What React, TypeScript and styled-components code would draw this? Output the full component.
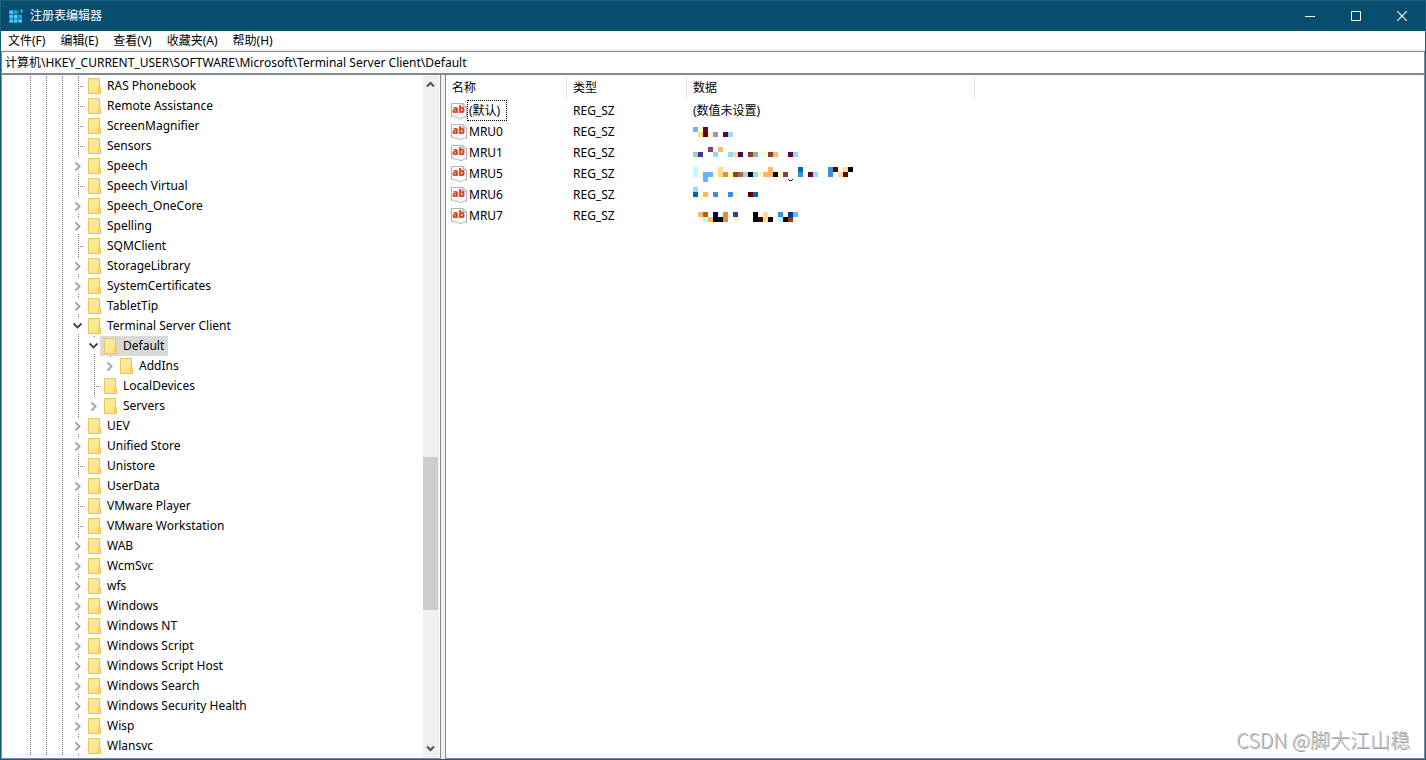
import React from "react";
import styled, { createGlobalStyle } from "styled-components";

const GlobalStyle = createGlobalStyle`
  * { box-sizing: border-box; }
  html, body { margin: 0; padding: 0; height: 100%; }
  body, button, input, table {
    font-family: "Noto Sans", "Noto Sans CJK SC", sans-serif;
    font-size: 12px;
    color: #000;
  }
  button { border: 0; padding: 0; background: none; }
`;

const FRAME = "#1b5e80";
const EDGE = "#828790";
const FACE = "#f0f0f0";

const Window = styled.div`
  display: flex;
  flex-direction: column;
  height: 100vh;
  overflow: hidden;
  background: ${FACE};
  border: 1px solid ${FRAME};
  position: relative;
`;

const TitleBar = styled.header`
  display: flex;
  align-items: center;
  flex: none;
  height: 30px;
  padding-left: 7px;
  background: #074d6d;
  color: #fff;
`;

const Title = styled.h1`
  flex: 1;
  margin: 0 0 0 6px;
  font-size: 12px;
  font-weight: 400;
  line-height: 18px;
`;

const CaptionButton = styled.button`
  display: flex;
  align-items: center;
  justify-content: center;
  width: 46px;
  height: 28px;
`;

const MenuBar = styled.nav`
  display: flex;
  flex: none;
  gap: 1px;
  height: 18px;
  background: #fff;
`;

const MenuButton = styled.button`
  padding: 0 7px;
  line-height: 20px;
  white-space: nowrap;
`;

const AddressInput = styled.input`
  flex: none;
  height: 24px;
  margin-top: 2px;
  padding: 0 3px 2px;
  border: solid ${EDGE};
  border-width: 1px 1px 2px;
  border-radius: 0;
  outline: 0;
  background: #fff;
`;

const Body = styled.div`
  display: flex;
  flex: 1;
  min-height: 0;
`;

const Pane = styled.section<{ $width?: number }>`
  display: flex;
  flex: ${(p) => (p.$width ? `0 0 ${p.$width}px` : "1")};
  min-width: 0;
  overflow: hidden;
  background: #fff;
  border: solid ${EDGE};
  border-width: 0 1px 1px;
`;

const Splitter = styled.div`
  flex: 0 0 4px;
  background: ${FACE};
`;

const Tree = styled.ul`
  flex: 1;
  min-width: 0;
  margin: 0;
  padding: 1px 0 0 18px;
  list-style: none;
  overflow: hidden;
`;

const TreeRow = styled.li`
  display: flex;
  height: 20px;
`;

const dotsDown = "repeating-linear-gradient(to bottom, #707070 0 1px, transparent 1px 2px)";
const dotsAcross = "repeating-linear-gradient(to right, #707070 0 1px, transparent 1px 2px)";

const Guide = styled.span<{ $leaf?: boolean }>`
  flex: 0 0 16px;
  background-image: ${(p) => (p.$leaf ? `${dotsDown}, ${dotsAcross}` : dotsDown)};
  background-size: 1px 100%, 6px 1px;
  background-position: 10px 0, 10px 10px;
  background-repeat: no-repeat;
`;

const Expander = styled.button<{ $last?: boolean }>`
  display: flex;
  align-items: center;
  justify-content: flex-end;
  flex: 0 0 16px;
  height: 20px;
  background-image: ${(p) => (p.$last ? dotsDown : `${dotsDown}, ${dotsDown}`)};
  background-size: 1px 2px, 1px 2px;
  background-position: 10px 0, 10px 18px;
  background-repeat: no-repeat;
`;

const TreeLabel = styled.span<{ $selected?: boolean }>`
  display: flex;
  align-items: center;
  gap: 5px;
  padding: 0 4px;
  line-height: 20px;
  white-space: nowrap;
  background: ${(p) => (p.$selected ? "#d9d9d9" : "transparent")};
`;

const ScrollBar = styled.div`
  display: flex;
  flex-direction: column;
  flex: 0 0 16px;
  margin-right: 1px;
  padding-bottom: 1px;
  background: ${FACE};
`;

const ScrollButton = styled.button`
  display: flex;
  align-items: center;
  justify-content: center;
  flex: 0 0 18px;
  width: 15px;
`;

const ScrollPart = styled.div<{ $grow: number; $thumb?: boolean }>`
  flex: ${(p) => p.$grow} 0 0;
  width: 15px;
  background: ${(p) => (p.$thumb ? "#cdcdcd" : "transparent")};
`;

const ValueTable = styled.table`
  table-layout: fixed;
  width: 100%;
  align-self: flex-start;
  border-collapse: separate;
  border-spacing: 0;
  margin-top: 1px;
`;

const HeadCell = styled.th<{ $edge?: boolean }>`
  height: 24px;
  padding: 0 6px;
  text-align: left;
  font-weight: 400;
  line-height: 18px;
  border-right: ${(p) => (p.$edge ? "1px solid #e5e5e5" : "0")};
`;

const Cell = styled.td`
  height: 21px;
  padding: 0 6px;
  line-height: 21px;
  vertical-align: top;
  white-space: nowrap;
`;

const NameCell = styled(Cell)`
  padding: 0 0 0 5px;
`;

const NameWrap = styled.div`
  display: flex;
  align-items: center;
  height: 21px;
`;

const ValueName = styled.span<{ $focused?: boolean }>`
  padding: 0 ${(p) => (p.$focused ? 6 : 1)}px 0 1px;
  line-height: 19px;
  border: 1px dotted ${(p) => (p.$focused ? "#000" : "transparent")};
`;

const Mosaic = styled.svg`
  display: block;
`;

const Watermark = styled.div`
  position: absolute;
  right: 15px;
  bottom: 4px;
  font-family: "Noto Sans CJK SC", sans-serif;
  font-size: 20px;
  font-weight: 300;
  line-height: 30px;
  color: #c0c0c0;
  text-shadow: 1px 1px 0 #a0a0a0;
`;

const AppIcon = () => (
  <svg width="16" height="16" viewBox="0 0 16 16" aria-hidden="true">
    <path d="M1 2h9v4h4v9H1z" fill="#0b6a9c" />
    <path d="M1.500 2.500h3.500v3.500h-3.500zM1.500 7h3.500v3.500h-3.500zM1.500 11.500h3.500v3h-3.500z" fill="#4cc8f8" />
    <path d="M6 11.500h3.500v3h-3.500zM6 7h3.500v3.500h-3.500z" fill="#52ccf8" />
    <path d="M6 2.500h3.500v3.500h-3.500z" fill="#1d9fe0" />
    <path d="M10.500 7h3.500v3.500h-3.500z" fill="#1d9fe0" />
    <path d="M10.500 11.500h3.500v3h-3.500z" fill="#52ccf8" />
    <path d="M13.500 1v4M11.500 3h4" stroke="#35b4ea" strokeWidth="1" />
  </svg>
);

const Folder = () => (
  <svg width="14" height="16" viewBox="0 0 14 16" aria-hidden="true">
    <defs>
      <linearGradient id="folder" x1="0" y1="0" x2="1" y2="1">
        <stop offset="0" stopColor="#ffeba6" />
        <stop offset="1" stopColor="#fde283" />
      </linearGradient>
    </defs>
    <path d="M.5 .5h11v9h1v6H.5z" fill="url(#folder)" stroke="#ecc650" />
    <path d="M10.500 15.500v-5.500h2v5.500z" fill="#ffe595" stroke="#ecc650" />
  </svg>
);

const Chevron = ({ dir }: { dir: "right" | "down" }) =>
  dir === "right" ? (
    <svg width="10" height="20" viewBox="0 0 10 20" aria-hidden="true">
      <path d="M1.500 6.500L5.500 10.500L1.500 14.500" fill="none" stroke="#a6a6a6" strokeWidth="1.900" />
    </svg>
  ) : (
    <svg width="11" height="20" viewBox="0 0 11 20" aria-hidden="true">
      <path d="M.5 7.500L4.500 11.500L8.500 7.500" fill="none" stroke="#404040" strokeWidth="1.900" />
    </svg>
  );

const ScrollArrow = ({ up }: { up?: boolean }) => (
  <svg width="9" height="7" viewBox="0 0 9 7" aria-hidden="true">
    <path d={up ? "M1 5.500L4.500 2L8 5.500" : "M1 1.500L4.500 5L8 1.500"} fill="none" stroke="#505050" strokeWidth="2" />
  </svg>
);

const StringIcon = () => (
  <svg width="16" height="16" viewBox="0 0 16 16" aria-hidden="true">
    <path
      d="M.5 .5H12L15.500 4V14.500L13.500 13.500L11.500 15L8.500 15.500L6.500 14L4.500 14.500L2.500 13L.5 13.500Z"
      fill="#fff"
      stroke="#b0b0b0"
    />
    <path d="M12 .5V4H15.500" fill="none" stroke="#a0a0a0" />
    <text x="7.500" y="10" textAnchor="middle" fontFamily="Open Sans, sans-serif" fontSize="10" fontWeight="800" fill="#d5421c">
      ab
    </text>
  </svg>
);

type Node = { name: string; level?: number; state?: "open" | "closed"; selected?: boolean; last?: boolean };

const nodes: Node[] = [
  { name: "RAS Phonebook" },
  { name: "Remote Assistance" },
  { name: "ScreenMagnifier" },
  { name: "Sensors" },
  { name: "Speech", state: "closed" },
  { name: "Speech Virtual" },
  { name: "Speech_OneCore", state: "closed" },
  { name: "Spelling", state: "closed" },
  { name: "SQMClient" },
  { name: "StorageLibrary", state: "closed" },
  { name: "SystemCertificates", state: "closed" },
  { name: "TabletTip", state: "closed" },
  { name: "Terminal Server Client", state: "open" },
  { name: "Default", level: 1, state: "open", selected: true },
  { name: "AddIns", level: 2, state: "closed", last: true },
  { name: "LocalDevices", level: 1 },
  { name: "Servers", level: 1, state: "closed", last: true },
  { name: "UEV", state: "closed" },
  { name: "Unified Store", state: "closed" },
  { name: "Unistore" },
  { name: "UserData", state: "closed" },
  { name: "VMware Player" },
  { name: "VMware Workstation" },
  { name: "WAB", state: "closed" },
  { name: "WcmSvc", state: "closed" },
  { name: "wfs", state: "closed" },
  { name: "Windows", state: "closed" },
  { name: "Windows NT", state: "closed" },
  { name: "Windows Script", state: "closed" },
  { name: "Windows Script Host", state: "closed" },
  { name: "Windows Search", state: "closed" },
  { name: "Windows Security Health", state: "closed" },
  { name: "Wisp", state: "closed" },
  { name: "Wlansvc", state: "closed" },
];

type Blocks = { top: number; lines: Record<number, string>[]; tail?: boolean };

const values: { name: string; text?: string; blocks?: Blocks }[] = [
  { name: "(默认)", text: "(数值未设置)" },
  {
    name: "MRU0",
    blocks: {
      top: 6,
      lines: [
        { 0: "#66b6ff", 1: "#ffffb6", 2: "#66003a" },
        { 1: "#ffdb90", 2: "#660000", 3: "#ffffb6", 4: "#9090db", 6: "#66003a", 7: "#90dbff" },
      ],
    },
  },
  {
    name: "MRU1",
    blocks: {
      top: 5,
      lines: [
        { 3: "#903a66", 5: "#ffb666" },
        {
          0: "#90dbb6", 1: "#3a3a90", 4: "#90dbff", 7: "#90dbff", 8: "#ffdb90", 9: "#3a0066", 11: "#903a3a",
          12: "#90b690", 13: "#dbffff", 14: "#ffffb6", 15: "#903a3a", 16: "#ffb666", 19: "#66003a", 20: "#90dbff",
        },
      ],
    },
  },
  {
    name: "MRU5",
    blocks: {
      top: 4,
      tail: true,
      lines: [
        { 0: "#b6ffff", 5: "#ffdb90", 15: "#ffb666", 21: "#0066b6", 27: "#3a90db", 28: "#660000", 30: "#ffdb90", 31: "#000" },
        {
          0: "#b6ffff", 1: "#ffffdb", 2: "#66b6ff", 3: "#66b6ff", 4: "#ffffb6", 5: "#ffdb90", 6: "#db903a",
          7: "#ffffb6", 8: "#903a3a", 9: "#b6663a", 10: "#90dbff", 11: "#000", 12: "#90dbff", 13: "#ffffb6",
          14: "#ffb666", 15: "#ffb666", 16: "#000", 17: "#ffffb6", 18: "#903a3a", 21: "#3a90db", 23: "#66003a",
          24: "#90dbff", 27: "#3a90db", 29: "#ffdb90", 30: "#660000",
        },
        { 2: "#66b6ff" },
      ],
    },
  },
  {
    name: "MRU6",
    blocks: {
      top: 3,
      lines: [
        { 0: "#90dbff" },
        {
          0: "#0066b6", 1: "#ffffdb", 2: "#ffb666", 4: "#3a90db", 7: "#3a90db", 8: "#ffffb6", 11: "#660000",
          12: "#0066b6",
        },
        { 1: "#ffffdb" },
      ],
    },
  },
  {
    name: "MRU7",
    blocks: {
      top: 7,
      lines: [
        {
          1: "#ffb666", 2: "#b66600", 4: "#000066", 6: "#db903a", 8: "#3a3a90", 12: "#000", 14: "#ffdb90",
          17: "#3a90db", 19: "#003a90", 20: "#66b6ff",
        },
        {
          2: "#b6ffff", 3: "#ffb666", 4: "#000", 5: "#000", 6: "#db903a", 8: "#ffffb6", 12: "#000", 13: "#3a0000",
          14: "#ffdb90", 15: "#000", 17: "#b6ffff", 18: "#000", 19: "#903a00",
        },
      ],
    },
  },
];

const BlockedValue = ({ top, lines, tail }: Blocks) => (
  <Mosaic width="165" height="21" viewBox="0 0 165 21" shapeRendering="crispEdges" aria-hidden="true">
    {lines.map((line, r) =>
      Object.entries(line).map(([c, fill]) => (
        <rect key={`${r}-${c}`} x={Number(c) * 5} y={top + r * 5} width="5" height="5" fill={fill} />
      ))
    )}
    {tail && <path d="M95 16h1v1h3v-1h1v1h-1v1h-3v-1h-1z" fill="#222" />}
  </Mosaic>
);

const menus = ["文件(F)", "编辑(E)", "查看(V)", "收藏夹(A)", "帮助(H)"];

export default function App() {
  return (
    <Window>
      <GlobalStyle />
      <TitleBar>
        <AppIcon />
        <Title>注册表编辑器</Title>
        <CaptionButton aria-label="最小化">
          <svg width="10" height="10" viewBox="0 0 10 10">
            <path d="M0 5.500h10" stroke="#fff" />
          </svg>
        </CaptionButton>
        <CaptionButton aria-label="最大化">
          <svg width="10" height="10" viewBox="0 0 10 10">
            <path d="M.5 .5h9v9h-9z" fill="none" stroke="#fff" />
          </svg>
        </CaptionButton>
        <CaptionButton aria-label="关闭">
          <svg width="10" height="10" viewBox="0 0 10 10">
            <path d="M0 0L10 10M10 0L0 10" stroke="#fff" strokeWidth="1.200" />
          </svg>
        </CaptionButton>
      </TitleBar>
      <MenuBar>
        {menus.map((m) => (
          <MenuButton key={m}>{m}</MenuButton>
        ))}
      </MenuBar>
      <AddressInput
        aria-label="地址"
        defaultValue={"计算机\\HKEY_CURRENT_USER\\SOFTWARE\\Microsoft\\Terminal Server Client\\Default"}
      />
      <Body>
        <Pane $width={440}>
          <Tree>
            {nodes.map(({ name, level = 0, state, selected, last }) => (
              <TreeRow key={name}>
                {Array.from({ length: 3 + level }, (_, i) => (
                  <Guide key={i} />
                ))}
                {state ? (
                  <Expander aria-label={name} aria-expanded={state === "open"} $last={last}>
                    <Chevron dir={state === "open" ? "down" : "right"} />
                  </Expander>
                ) : (
                  <Guide $leaf />
                )}
                <TreeLabel $selected={selected}>
                  <Folder />
                  {name}
                </TreeLabel>
              </TreeRow>
            ))}
          </Tree>
          <ScrollBar>
            <ScrollButton aria-label="向上滚动">
              <ScrollArrow up />
            </ScrollButton>
            <ScrollPart $grow={364} />
            <ScrollPart $grow={153} $thumb />
            <ScrollPart $grow={129} />
            <ScrollButton aria-label="向下滚动">
              <ScrollArrow />
            </ScrollButton>
          </ScrollBar>
        </Pane>
        <Splitter />
        <Pane>
          <ValueTable>
            <colgroup>
              <col width="121" />
              <col width="120" />
              <col width="288" />
              <col />
            </colgroup>
            <thead>
              <tr>
                <HeadCell $edge>名称</HeadCell>
                <HeadCell $edge>类型</HeadCell>
                <HeadCell $edge>数据</HeadCell>
                <HeadCell as="td" />
              </tr>
            </thead>
            <tbody>
              {values.map(({ name, text, blocks }, i) => (
                <tr key={name}>
                  <NameCell>
                    <NameWrap>
                      <StringIcon />
                      <ValueName $focused={i === 0}>{name}</ValueName>
                    </NameWrap>
                  </NameCell>
                  <Cell>REG_SZ</Cell>
                  <Cell>{blocks ? <BlockedValue {...blocks} /> : text}</Cell>
                  <Cell />
                </tr>
              ))}
            </tbody>
          </ValueTable>
        </Pane>
      </Body>
      <Watermark>CSDN @脚大江山稳</Watermark>
    </Window>
  );
}
